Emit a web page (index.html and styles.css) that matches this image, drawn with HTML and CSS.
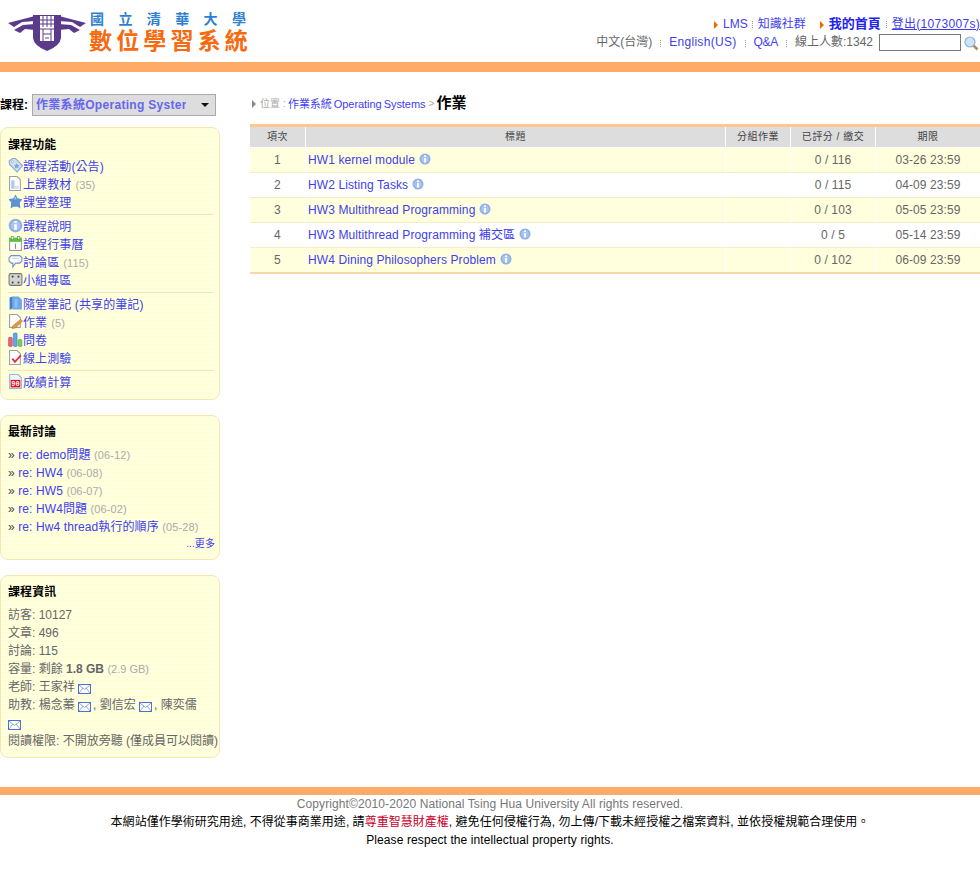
FILE: index.html
```html
<!DOCTYPE html>
<html lang="zh-TW">
<head>
<meta charset="UTF-8" />
<title>作業 - 國立清華大學數位學習系統</title>
<link rel="stylesheet" href="styles.css">
</head>
<body>
<svg class="sprite" width="0" height="0">
  <symbol id="i-info" viewBox="0 0 12 12"><circle cx="6" cy="6" r="5.5" fill="#8fb0e6"/><circle cx="6" cy="6" r="3.8" fill="#a9c4ef"/><rect x="5" y="2.4" width="2" height="1.6" fill="#fff"/><rect x="5" y="5" width="2" height="4.6" fill="#fff"/></symbol>
  <symbol id="i-mail" viewBox="0 0 13 10"><rect x=".5" y=".5" width="12" height="9" fill="#fff" stroke="#4a6fe0"/><path d="M1 1l5.500 4.500L12 1M1 9l4-5M12 9L8 4" fill="none" stroke="#7d8fb8" stroke-width=".8"/></symbol>
  <symbol id="i-tag" viewBox="0 0 14 14"><path d="M1 3l3-2.500h3l6.500 6.500-5 6L1.500 6z" fill="#cfe0f5" stroke="#8fa9c8"/><circle cx="4" cy="3.500" r="1" fill="#fff" stroke="#8fa9c8" stroke-width=".6"/><path d="M8 5l1 1.500 1.500.3-1 1.200.2 1.500-1.700-.7-1.500.7.200-1.500-1-1.200 1.500-.3z" fill="#6fa5e0"/></symbol>
  <symbol id="i-doc" viewBox="0 0 14 14"><path d="M1.500 .5h7l3 3v10h-10z" fill="#fff" stroke="#a0a0a0"/><rect x="3" y="4" width="3" height="8" fill="#a8cdec"/><rect x="6" y="9" width="4" height="3" fill="#d0e4f5"/></symbol>
  <symbol id="i-star" viewBox="0 0 14 14"><path d="M7 .5l2 3.500 4.500 1-2.500 3 .5 5.500-2.500-1.500h-4L2.500 13.500 3 8 .5 5l4.500-1z" fill="#5f93cf"/><path d="M7 2l1 3H5.500z" fill="#a9cbee"/></symbol>
  <symbol id="i-cal" viewBox="0 0 14 14"><rect x="1.500" y="2.500" width="11" height="11" fill="#fff" stroke="#9a9a9a"/><rect x="1" y="1.500" width="12" height="4" fill="#62c04a"/><rect x="3" y=".5" width="2" height="3" fill="#e8f5e0" stroke="#3f8f30" stroke-width=".5"/><rect x="9" y=".5" width="2" height="3" fill="#e8f5e0" stroke="#3f8f30" stroke-width=".5"/><rect x="6.500" y="7" width="1" height="5" fill="#888"/></symbol>
  <symbol id="i-chat" viewBox="0 0 14 14"><path d="M3 1.500h8l2 2v3l-2 2H7l-2.500 3.500V8.500H3l-2-2v-3z" fill="#fff" stroke="#6e93bd"/><path d="M3.500 4h7" stroke="#bcd2ea"/></symbol>
  <symbol id="i-dice" viewBox="0 0 14 14"><rect x="1" y="1.500" width="12" height="11" rx="1.500" fill="#d5d5d0" stroke="#777"/><rect x="3.500" y="3.500" width="1.600" height="1.600" fill="#333"/><rect x="9" y="3.500" width="1.600" height="1.600" fill="#333"/><rect x="3.500" y="9" width="1.600" height="1.600" fill="#333"/><rect x="9" y="9" width="1.600" height="1.600" fill="#333"/></symbol>
  <symbol id="i-note" viewBox="0 0 14 14"><path d="M1.500 1.500l3-1v11l-3 1.500z" fill="#3f7fd0"/><path d="M4 .5h6l3 3v9H4z" fill="#6ea8e8"/><path d="M6 3h3v8H6z" fill="#8cc0f2"/></symbol>
  <symbol id="i-edit" viewBox="0 0 14 14"><path d="M1.500 .5h7l3 3v9h-10z" fill="#fff" stroke="#a0a0a0"/><path d="M12 5l1.500 1.500L7 13l-3 .5.500-2.500z" fill="#e89a3c" stroke="#a8682a" stroke-width=".5"/></symbol>
  <symbol id="i-bars" viewBox="0 0 14 14"><rect x=".5" y="5" width="3.500" height="8.500" rx="1" fill="#f0607a" stroke="#c03050" stroke-width=".5"/><rect x="5" y="1" width="3.500" height="12.500" rx="1" fill="#5fa8e8" stroke="#3070b0" stroke-width=".5"/><rect x="9.500" y="7" width="3.500" height="6.500" rx="1" fill="#70d060" stroke="#38a030" stroke-width=".5"/></symbol>
  <symbol id="i-check" viewBox="0 0 14 14"><path d="M1.500 .5h7l3 3v10h-10z" fill="#fff" stroke="#a0a0a0"/><path d="M4 8l2.500 3L12 5" fill="none" stroke="#e0304a" stroke-width="1.800"/></symbol>
</svg>

<header class="top">
  <a class="logo" href="#">
    <svg class="emblem" width="78" height="40" viewBox="0 0 78 40">
      <path d="M0 9L27 2v5L14 8 6 13zM78 9L51 2v5l13 1 8 5z" fill="#5b3a8c"/>
      <path d="M6 16l9-5 12-1v6l-10-1-5 4zM72 16l-9-5-12-1v6l10-1 5 4z" fill="#5b3a8c"/>
      <path d="M25 1h28v23q-1 8-14 13-13-5-14-13z" fill="#5b3a8c"/>
      <rect x="32" y="2" width="14" height="25" fill="#fff"/>
      <path d="M35 2v11M39 2v11M43 2v11M32 6h14M32 10h14M32 15h14M35 15v12M43 15v12M35 20h8M37 24h4" stroke="#5b3a8c" fill="none"/>
    </svg>
    <div class="logo-text">
      <div class="logo-school"><span>國</span><span>立</span><span>清</span><span>華</span><span>大</span><span>學</span></div>
      <div class="logo-system"><span>數</span><span>位</span><span>學</span><span>習</span><span>系</span><span>統</span></div>
    </div>
  </a>
  <div class="top-links">
    <div class="top-row">
      <i class="arrow"></i><a class="lms" href="#">LMS</a><i class="dots"></i><a href="#">知識社群</a>
      <i class="arrow arrow-far"></i><a href="#"><b>我的首頁</b></a><i class="dots"></i><a class="under" href="#">登出(1073007s)</a>
    </div>
    <div class="top-row top-row-2">
      <span>中文(台灣)</span><i class="dots wide"></i><a class="wider" href="#">English(US)</a><i class="dots wide"></i><a class="qa" href="#">Q&amp;A</a><i class="dots wide"></i><span>線上人數:1342</span>
      <input class="search" type="text">
      <svg class="lens" width="15" height="15" viewBox="0 0 15 15"><path d="M9.500 9.500l4 4" stroke="#b98a4a" stroke-width="2.500"/><circle cx="6" cy="6" r="5" fill="#cfe3f7" stroke="#8fb2d8" stroke-width="1.200"/></svg>
    </div>
  </div>
</header>
<div class="bar"></div>

<div class="page">
  <aside class="side">
    <div class="course-pick">
      <b>課程:</b>
      <label class="pick">
        <select><option>作業系統Operating Systems</option></select>
      </label>
    </div>

    <section class="box">
      <h3>課程功能</h3>
      <ul class="menu">
        <li><svg class="mi"><use href="#i-tag"/></svg><a href="#">課程活動(公告)</a></li>
        <li><svg class="mi"><use href="#i-doc"/></svg><a href="#">上課教材</a><small>(35)</small></li>
        <li><svg class="mi"><use href="#i-star"/></svg><a href="#">課堂整理</a></li>
        <li class="sep"></li>
        <li><svg class="mi"><use href="#i-info"/></svg><a href="#">課程說明</a></li>
        <li><svg class="mi"><use href="#i-cal"/></svg><a href="#">課程行事曆</a></li>
        <li><svg class="mi"><use href="#i-chat"/></svg><a href="#">討論區</a><small>(115)</small></li>
        <li><svg class="mi"><use href="#i-dice"/></svg><a href="#">小組專區</a></li>
        <li class="sep"></li>
        <li><svg class="mi"><use href="#i-note"/></svg><a href="#">隨堂筆記</a>&nbsp;<a href="#">(共享的筆記)</a></li>
        <li><svg class="mi"><use href="#i-edit"/></svg><a href="#">作業</a><small>(5)</small></li>
        <li><svg class="mi"><use href="#i-bars"/></svg><a href="#">問卷</a></li>
        <li><svg class="mi"><use href="#i-check"/></svg><a href="#">線上測驗</a></li>
        <li class="sep"></li>
        <li>
          <svg class="mi" viewBox="0 0 14 14"><path d="M1.500 .5h8l3 3v10h-11z" fill="#eef5fc" stroke="#9db7d2"/><rect x="2.500" y="5.500" width="9" height="7" fill="#e01020"/><text x="7" y="11.500" class="score-text">90</text></svg>
          <a href="#">成績計算</a>
        </li>
      </ul>
    </section>

    <section class="box">
      <h3>最新討論</h3>
      <ul class="news">
        <li>» <a href="#">re: demo問題</a> <small>(06-12)</small></li>
        <li>» <a href="#">re: HW4</a> <small>(06-08)</small></li>
        <li>» <a href="#">re: HW5</a> <small>(06-07)</small></li>
        <li>» <a href="#">re: HW4問題</a> <small>(06-02)</small></li>
        <li>» <a href="#">re: Hw4 thread執行的順序</a> <small>(05-28)</small></li>
      </ul>
      <div class="more"><a href="#">...更多</a></div>
    </section>

    <section class="box">
      <h3>課程資訊</h3>
      <div class="info">
        <div>訪客: 10127</div>
        <div>文章: 496</div>
        <div>討論: 115</div>
        <div>容量: 剩餘 <b>1.8 GB</b> <small>(2.9 GB)</small></div>
        <div>老師: 王家祥 <svg class="mail"><use href="#i-mail"/></svg></div>
        <div class="ta">助教: 楊念蓁 <svg class="mail"><use href="#i-mail"/></svg>, 劉信宏 <svg class="mail"><use href="#i-mail"/></svg>, 陳奕儒 <svg class="mail"><use href="#i-mail"/></svg></div>
        <div class="nowrap">閱讀權限: 不開放旁聽 (僅成員可以閱讀)</div>
      </div>
    </section>
  </aside>

  <main class="main">
    <div class="crumb">
      <i class="crumb-arrow"></i><span class="crumb-pos">位置 :</span>
      <a href="#">作業系統 Operating Systems</a><span class="crumb-gt">&gt;</span><b>作業</b>
    </div>
    <table class="list">
      <colgroup><col class="c1"><col><col class="c3"><col class="c4"><col class="c5"></colgroup>
      <thead>
        <tr><th>項次</th><th>標題</th><th>分組作業</th><th>已評分 / 繳交</th><th>期限</th></tr>
      </thead>
      <tbody>
        <tr class="odd"><td>1</td><td class="title"><a href="#">HW1 kernel module</a><svg class="info-i"><use href="#i-info"/></svg></td><td></td><td>0 / 116</td><td>03-26 23:59</td></tr>
        <tr><td>2</td><td class="title"><a href="#">HW2 Listing Tasks</a><svg class="info-i"><use href="#i-info"/></svg></td><td></td><td>0 / 115</td><td>04-09 23:59</td></tr>
        <tr class="odd"><td>3</td><td class="title"><a href="#">HW3 Multithread Programming</a><svg class="info-i"><use href="#i-info"/></svg></td><td></td><td>0 / 103</td><td>05-05 23:59</td></tr>
        <tr><td>4</td><td class="title"><a href="#">HW3 Multithread Programming 補交區</a><svg class="info-i"><use href="#i-info"/></svg></td><td></td><td>0 / 5</td><td>05-14 23:59</td></tr>
        <tr class="odd"><td>5</td><td class="title"><a href="#">HW4 Dining Philosophers Problem</a><svg class="info-i"><use href="#i-info"/></svg></td><td></td><td>0 / 102</td><td>06-09 23:59</td></tr>
      </tbody>
    </table>
  </main>
</div>

<footer class="foot">
  <div class="copy">Copyright©2010-2020 National Tsing Hua University All rights reserved.</div>
  <div class="notice">本網站僅作學術研究用途, 不得從事商業用途, 請<span class="red">尊重智慧財產權</span>, 避免任何侵權行為, 勿上傳/下載未經授權之檔案資料, 並依授權規範合理使用。</div>
  <div class="notice en">Please respect the intellectual property rights.</div>
</footer>
</body>
</html>
```

FILE: styles.css
```css
body {
  margin: 0;
  background: #fff;
  color: #666;
  font-family: "Liberation Sans", Arial, "Noto Sans CJK TC", sans-serif;
  font-size: 12px;
  line-height: 18px;
  letter-spacing: .1px;
}
a { color: #4040f0; text-decoration: none; }
small { font-size: 11px; color: #aaa; }
.sprite { display: block; height: 0; }

/* header */
.top {
  height: 62px;
  display: flex;
  justify-content: space-between;
}
.logo {
  display: flex;
  padding: 12px 0 0 8px;
  gap: 3px;
  align-self: flex-start;
}
.emblem { margin-top: 2px; }
.logo-text { width: 159px; }
.logo-school, .logo-system {
  display: flex;
  justify-content: space-between;
  font-weight: bold;
}
.logo-school { font-size: 14px; line-height: 15px; color: #2f7fd0; padding: 0 2px 0 1px; }
.logo-system { font-size: 23px; line-height: 26px; color: #f66a10; margin-top: 1px; }
.top-links {
  display: flex;
  flex-direction: column;
  align-items: flex-end;
  padding-top: 15px;
}
.top-row { display: flex; align-items: center; height: 18px; letter-spacing: 0; }
.top-row-2 { margin-right: 1px; }
.top-row b { color: #2222ee; font-size: 13px; }
.under { text-decoration: underline; text-decoration-thickness: 1px; letter-spacing: .3px; }
.wider { letter-spacing: .3px; }
.qa { letter-spacing: -.3px; }
.lms { margin-right: -1px; }
.arrow {
  width: 0; height: 0;
  margin: 2px 5px 0 0;
  border-left: 4px solid #f06a00;
  border-top: 4px solid transparent;
  border-bottom: 4px solid transparent;
}
.arrow-far { margin-left: 14px; }
.dots {
  width: 1px; height: 7px;
  margin: 1px 5px 0;
  background: repeating-linear-gradient(#999 0 1px, transparent 1px 2px);
}
.dots.wide { margin: 2px 8px 0; }
.search {
  width: 82px; height: 17px;
  box-sizing: border-box;
  margin: 0 3px 0 6px;
  border: 1px solid #777;
  background: #fff;
  padding: 0;
}
.lens { margin-top: 3px; }
.bar { height: 10px; background: #ffaa66; }

/* page columns */
.page { display: flex; gap: 30px; padding-top: 22px; }
.side { width: 220px; flex: none; }
.main { flex: 1; min-width: 0; }

.course-pick {
  display: flex;
  align-items: center;
  gap: 4px;
  height: 22px;
  margin-bottom: 11px;
  color: #000;
  letter-spacing: 0;
}
.pick { position: relative; display: block; }
.pick::after {
  content: "";
  position: absolute;
  right: 7px; top: 9px;
  border-top: 4px solid #111;
  border-left: 4px solid transparent;
  border-right: 4px solid transparent;
}
.pick select {
  display: block;
  width: 184px; height: 22px;
  box-sizing: border-box;
  appearance: none;
  border: 1px solid #aaa;
  border-radius: 0;
  background: #ddd;
  color: #6666ee;
  font: bold 12px "Liberation Sans", "Noto Sans CJK TC", sans-serif;
  letter-spacing: .3px;
  padding: 0 29px 0 3px;
}

.box {
  width: 220px;
  box-sizing: border-box;
  margin-bottom: 15px;
  padding: 8px 0 0 7px;
  background: repeating-linear-gradient(#ffffd6 0 2px, #ffffe2 2px 4px);
  border: 1px solid #f6e6b4;
  border-radius: 8px;
}
.box + .box { padding-top: 7px; }
.box h3 {
  margin: 0 0 4px;
  color: #000;
  font-size: 12px;
  line-height: 18px;
}
.menu, .news { list-style: none; margin: 0; padding: 0; }
.menu { padding-bottom: 7px; }
.menu li { display: flex; align-items: center; height: 18px; }
.menu li.sep {
  height: 1px;
  margin: 2px 5px 3px 0;
  background: #efe3c0;
}
.menu small { margin-left: 4px; }
.mi { width: 15px; height: 15px; margin: -3px 0 0 0; flex: none; }
.score-text { font: bold 6.500px "Liberation Mono", monospace; fill: #fff; text-anchor: middle; }

.news { padding-top: 1px; color: #444; }
.news li { white-space: nowrap; }
.more { text-align: right; font-size: 10px; line-height: 14px; padding: 1px 4px 8px 0; }

.info { padding: 1px 0 7px; letter-spacing: 0; }
.info .ta { padding-right: 6px; }
.info .nowrap { white-space: nowrap; }
.mail { width: 13px; height: 10px; margin-right: 2px; vertical-align: -3px; }

/* main */
.crumb {
  display: flex;
  align-items: center;
  gap: 3px;
  height: 20px;
  margin-bottom: 10px;
  padding-left: 2px;
  font-size: 10px;
  color: #aaa;
}
.crumb a { font-size: 11px; margin-left: -1px; word-spacing: -1px; letter-spacing: -.05px; }
.crumb b { color: #000; font-size: 15px; line-height: 18px; margin: -2px 0 0 -1px; }
.crumb-arrow {
  width: 0; height: 0;
  margin-right: 1px;
  border-left: 4px solid #888;
  border-top: 4px solid transparent;
  border-bottom: 4px solid transparent;
}

.list {
  width: 730px;
  table-layout: fixed;
  border-collapse: separate;
  border-spacing: 0;
  border-top: 3px solid #ffc78f;
  border-bottom: 2px solid #f5d9a8;
}
.c1 { width: 55px; }
.c3 { width: 65px; }
.c4 { width: 85px; }
.c5 { width: 105px; }
.list th {
  height: 20px;
  padding: 0;
  background: #ddd;
  border-left: 1px solid #fff;
  border-bottom: 1px solid #fff;
  font-size: 10px;
  font-weight: normal;
  letter-spacing: .5px;
  color: #444;
}
.list th:first-child, .list td:first-child { border-left: 0; }
.list td {
  height: 24px;
  padding: 0;
  border-left: 1px solid #fff;
  border-bottom: 1px solid #f2efc4;
  text-align: center;
}
.list tr:last-child td { border-bottom: 0; }
.list .odd td { background: #ffffdd; }
.list td.title { text-align: left; padding-left: 2px; }
.info-i { width: 12px; height: 12px; margin-left: 4px; vertical-align: -1px; }

/* footer */
.foot {
  margin-top: 14px;
  border-top: 8px solid #ffaa66;
  height: 74px;
  padding-top: 1px;
  text-align: center;
}
.copy { line-height: 17px; color: #777; }
.notice { color: #000; line-height: 19px; letter-spacing: .03px; }
.notice.en { line-height: 18px; letter-spacing: .1px; margin-top: -1px; }
.red { color: #c8002a; }
```
